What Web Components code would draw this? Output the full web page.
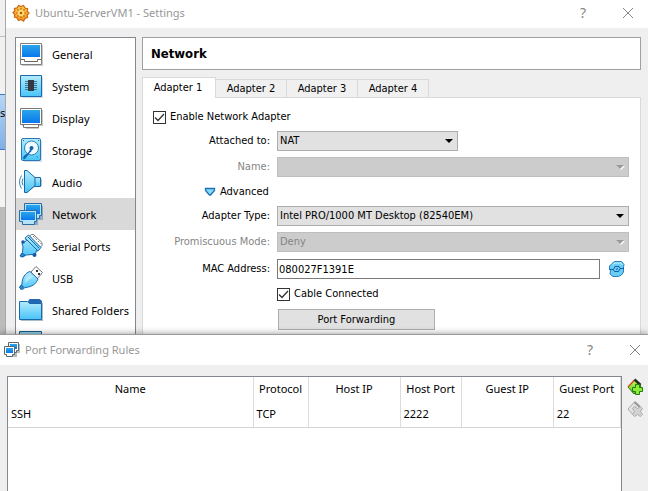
<!DOCTYPE html>
<html lang="en">
<head>
<meta charset="utf-8">
<title>Ubuntu-ServerVM1 - Settings</title>
<style>
  html, body { height: 100%; margin: 0; }
  body {
    position: relative; overflow: hidden; background: #fff; color: #000;
    --ui: "Noto Sans", "Open Sans", sans-serif;
    --form: "DejaVu Sans Condensed", "DejaVu Sans", sans-serif;
    font: 11px/16px var(--ui);
  }
  manager-backdrop { position: absolute; inset: 0; }
  app-window { position: absolute; inset: 0 0 0 5px; }
  app-window.rules { inset: 334px 0 0 0; }
  settings-body, rules-body { flex: 1; }
</style>
</head>
<body>
<manager-backdrop></manager-backdrop>
<app-window caption="Ubuntu-ServerVM1 - Settings" class="settings">
  <ui-icon slot="icon" name="gear" size="18"></ui-icon>
  <settings-body></settings-body>
</app-window>
<app-window caption="Port Forwarding Rules" class="rules">
  <ui-icon slot="icon" name="netsmall" size="18"></ui-icon>
  <rules-body></rules-body>
</app-window>

<script>
const DEFS = `<defs>
  <linearGradient id="scr" x2="0" y2="1"><stop stop-color="#2aa5ea"/><stop offset="1" stop-color="#0878ec"/></linearGradient>
  <linearGradient id="cy" x2="0" y2="1"><stop stop-color="#b4ecfc"/><stop offset="1" stop-color="#48c4f8"/></linearGradient>
  <linearGradient id="or" x2="0" y2="1"><stop stop-color="#fdcb50"/><stop offset="1" stop-color="#f29a24"/></linearGradient>
  <linearGradient id="gr" x2="0" y2="1"><stop stop-color="#c4f45a"/><stop offset="1" stop-color="#58cc20"/></linearGradient></defs>`;

const ICONS = {
  gear: `<path d="M6.500 1.500 9 2.500l2.500-1 1.500 2.500 2.500.8-.3 2.700 1.800 1.500-1.800 2 .3 2.500-2.500 1-1.500 2.500L9 15.500l-2.500 1L5 14l-2.500-1 .3-2.500-1.800-2L2.800 7l-.3-2.500L5 4z" fill="url(#or)" stroke="#cf6a12" stroke-width="1.300"/>
    <circle cx="9" cy="9" r="3.200" fill="#fddc74"/><circle cx="9" cy="9" r="1.300" fill="#b4560c"/>
    <path d="M9 4v1.500M9 12.500V14M4 9h1.500M12.500 9H14M5.500 5.500l1 1M11.500 11.500l1 1M12.500 5.500l-1 1M6.500 11.500l-1 1" stroke="#b65c10" stroke-width="1.200"/>`,
  general: `<path d="M3 3h21v21H3z" fill="#c9c9c9"/><path d="M1.500 1.500h21v21h-21z" fill="#fff" stroke="#808080"/><path d="M3 3h18v12H3z" fill="url(#scr)"/><path d="M2 17.500h3.500v2h13v-2H22" fill="none" stroke="#666"/>`,
  system: `<path d="M3 3h21v21H3z" fill="#d4dde4"/><path d="M1.500 1.500h21v21h-21z" fill="url(#cy)" stroke="#1b68a8"/><path d="M6 7.500h12M6 9.500h12M6 11.500h12M6 13.500h12M6 15.500h12" stroke="#387894"/><path d="M9 6h6v11H9z" fill="#333a44"/>`,
  display: `<path d="M3 4h21v16H20v3H7v-3H3z" fill="#c9c9c9"/><path d="M1.500 2.500h21v16h-3v3h-15v-3h-3z" fill="#fff" stroke="#777"/><path d="M3 4h18v13H3z" fill="url(#scr)"/><path d="M4 18.500h16" stroke="#777"/>`,
  storage: `<path d="M5 3h18v21H5z" fill="#d4dde4"/><rect x="2.500" y=".5" width="19" height="22" rx="1.500" fill="url(#cy)" stroke="#2a76b8"/><circle cx="12.500" cy="10" r="7" fill="#eefaff" stroke="#2b80b8"/><circle cx="12.500" cy="10" r="2" fill="#1a5fa8"/><path d="M13 11c0 3-2 3-3 5l-4 5c-3 1-2-3 0-4s5-4 5-6" fill="#1667ba"/><path d="M18 18.500a3 3 0 0 0 1 1M4 2.500h1M19 2.500h1" stroke="#1a68b0"/>`,
  audio: `<path d="M8 2v21l9-7h6V9h-6L9 2z" fill="#b6c3cc"/><path d="M15.500 7.500h6v9h-6z" fill="url(#cy)" stroke="#1a68a8"/><path d="M5.500.5v22H8l8-7V7.500l-8-7z" fill="url(#cy)" stroke="#1a68a8"/><path d="M4 8.500Q2 12 4 15.500M2.500 5.500Q-1.500 12 2.500 18.500" fill="none" stroke="#3388ba"/>`,
  network: `<path d="M8 4h16v14h-5v5H4v-3H2v-9h6z" fill="#8ea9bb"/><path d="M5.500 1.500h17v12h-2v3h-12v-3h-3z" fill="#b4e2f8" stroke="#2c6ca2"/><path d="M7 3h14v9H7z" fill="url(#scr)"/><path d="M.5 8.500h17v11h-2v3h-12v-3h-3z" fill="#b4e2f8" stroke="#2c6ca2"/><path d="M2 10h14v8H2z" fill="url(#scr)"/>`,
  netsmall: `<path d="M6 3h11v9h-3v4H4v-3H2V7h4z" fill="#b5bcc0"/><path d="M5.500 1.500h10v8h-2v2h-8z" fill="#fff" stroke="#5d666c"/><path d="M7 3h7v5H7z" fill="url(#scr)"/><path d="M1.500 5.500h10v8h-2v2h-6v-2h-2z" fill="#fff" stroke="#5d666c"/><path d="M3 7h7v5H3z" fill="url(#scr)"/>`,
  serial: `<path d="m10.500 2 2-1.500h2l8.500 8v3l-2 2z" fill="#fff" stroke="#777"/><path d="m14 2 7.500 7.500" stroke="#333" stroke-dasharray="1 1.400"/><path d="m6 4 3.500-3L22 13.500 19 17l-1.500-.5-1.500 5-3-1-6 .5-3 2-2.500-1 2-3.500.5-6-1-3 4.500-3z" fill="url(#cy)" stroke="#1868ac"/><path d="M7 5 18.500 16.500M9 3l11 11" stroke="#1868ac"/><circle cx="4" cy="8" r="1.800" fill="#145aa6"/><circle cx="15.500" cy="21" r="2" fill="#145aa6"/><path d="m3 19 3 2-3 2-2-1z" fill="#2d8dce" stroke="#1762a4"/>`,
  usb: `<path d="m12 6 5-5.500 6.500 6L18 13z" fill="#fafafa" stroke="#777"/><path d="M17 4h2v2h-2zM19 7h2v2h-2z" fill="#333"/><path d="m11 5.500 8 7.500c-2 5-6 8-13 8.500l-2.500 2-2.500-2L3 18C3 12 6 7 11 5.500z" fill="url(#cy)" stroke="#1b68a8"/><path d="M8 10.500c-2 2-2.500 5-2 7l9-8z" fill="#fff" opacity=".35"/><path d="m.5 21 2-2 2 2-2.500 2.500z" fill="#2d8dce" stroke="#1762a4"/>`,
  folder: `<path d="M9 3.500 10.500 1h10L23 3v5H9z" fill="#2468b4"/><path d="M2 5h22v18H2z" fill="#a9bdc8"/><path d="M.5 3.500h8l2 2h12v16H.5z" fill="url(#cy)" stroke="#1b68a8"/>`,
  panel: `<path d="M.5 1.500h22v21H.5z" fill="#8fd0e4" stroke="#1d5f8c"/><path d="M3 4.500h17" stroke="#3588a8"/>`,
  refresh: `<path d="M3 2.500 5.500.5h7l2.500 3-.5 2.500v5l-2 3-3 1.500H4L1 13l.5-3L.5 8V5z" fill="#6acdf6" stroke="#2480c2"/>
    <path d="M3.500 3.500 6 2h6l1.500 2" fill="none" stroke="#c4f1ff"/>
    <path d="M.5 8.500h4l1.500-3h4l1 1.500M15 7.500h-4l-1.500 3h-4l-1-1.500M7 8.500l2-1" fill="none" stroke="#155ea6"/>`,
  tri: `<path d="M1.500 2.500h9v2L6.500 9h-1l-4-4.500z" fill="#86dafa" stroke="#1e70b4" stroke-width="1.300"/>`,
  add: `<path d="m1 8 6.500-7L14 7l-7 8z" fill="url(#gr)" stroke="#2d7714"/><path d="M1 8 7.500 1" stroke="#d84c28" stroke-width="1.300"/><path d="M7.500.5 13.500 6" stroke="#262c22" stroke-width="2.500"/><path d="M8.500 5.500h4v3h3v4h-3v3h-4v-3h-3v-4h3z" fill="#8ced38" stroke="#247b10"/>`,
  del: `<path d="m1 8 6.500-7L14 7l-7 8z" fill="#e2e2e2" stroke="#a9a9a9"/><path d="M7.500 1 13 6" stroke="#999" stroke-width="2.300"/><path d="m5.500 7.500 2-2 3 2 3-2 2 2-2 3 2 3-2 2-3-2-3 2-2-2 2-3z" fill="#d2d2d2" stroke="#ababab"/>`,
  close: `<path d="m1 1 10 10M11 1 1 11" fill="none" stroke="#868686"/>`,
  tick: `<path d="m2 6.500 3 3L11 3" fill="none" stroke="#333" stroke-width="1.300"/>`,
  arrow: `<path d="M0 2h8L4 6z" fill="currentColor"/>`
};
const BOX = { gear: 18, netsmall: 18, refresh: 16, tri: 12, add: 16, del: 16, close: 12, tick: 13, arrow: 8 };

function define(name, template) {
  const t = document.createElement('template');
  customElements.define(name, class extends HTMLElement {
    connectedCallback() {
      if (this.shadowRoot) return;
      t.innerHTML = typeof template === 'function' ? template(this) : template;
      this.attachShadow({ mode: 'open' }).append(t.content.cloneNode(true));
    }
  });
}
const attr = (el, n, d = '') => el.getAttribute(n) ?? d;

define('ui-icon', el => {
  const n = attr(el, 'name'), s = attr(el, 'size', '24'), b = BOX[n] || 24;
  return `<style>:host{display:block;flex:none;width:${s}px;height:${s}px}svg{display:block;overflow:visible}</style>
    <svg width="${s}" height="${s}" viewBox="0 0 ${b} ${b}" aria-hidden="true">${DEFS}${ICONS[n]}</svg>`;
});

define('manager-backdrop', `<style>
  :host{display:flex;flex-direction:column;background:#bcbcbc;overflow:hidden}
  .bar{height:36px;background:#f0f0f0;border-bottom:1px solid #bdbdbd}
  .gap{height:57px;background:#f1f1f1}
  .vm{height:54px;line-height:36px;background:linear-gradient(#b7d5f5,#7fb0ea);border:solid #3d7cc4;border-width:1px 0}
  .rest{height:57px;background:#f4f4f4}
  </style><div class="bar"></div><div class="gap"></div><div class="vm">sc</div><div class="rest"></div>`);

define('app-window', el => `<style>
  :host{display:flex;flex-direction:column;box-sizing:border-box;background:#efefef;border-left:1px solid #a8a8a8}
  :host(.rules){border-left:0;border-top:1px solid #9a9a9a;box-shadow:0 -1px 6px #0005}
  header{display:flex;align-items:center;gap:5px;height:28px;padding:0 13px 3px 6px;box-sizing:border-box;background:#fff;color:#979797}
  :host(.rules) header{height:30px;padding:0 6px 1px 3px;gap:4px}
  h1{flex:1;margin:0;font:inherit}
  button{padding:0;border:0;background:none;color:#868686;font:14px/16px var(--ui);width:14px;display:grid;place-items:center}
  .tools{display:flex;align-items:center;gap:31px}
  </style>
  <header><slot name="icon"></slot><h1>${attr(el, 'caption')}</h1><div class="tools">
  <button type="button" title="Help">?</button><button type="button" aria-label="Close"><ui-icon name="close" size="12"></ui-icon></button></div></header>
  <slot></slot>`);

define('nav-item', el => `<style>
  :host{display:block}
  button{display:flex;align-items:center;gap:9px;width:100%;height:32px;padding:0 0 0 3px;border:0;background:none;font:inherit;color:inherit;text-align:left;white-space:nowrap}
  span{padding-top:1px}
  :host([selected]) button{background:#d9d9d9}
  </style><button type="button"><ui-icon name="${attr(el, 'icon')}"></ui-icon><span><slot></slot></span></button>`);

define('check-box', el => `<style>
  :host{display:block}
  label{display:flex;width:fit-content;align-items:center;gap:4px}
  .box{display:grid}
  .box>*{grid-area:1/1}
  input{appearance:none;width:13px;height:13px;margin:0;border:1px solid #333;background:#fff}
  ui-icon{visibility:hidden;pointer-events:none}
  input:checked+ui-icon{visibility:visible}
  </style><label><span class="box"><input type="checkbox" checked><ui-icon name="tick" size="13"></ui-icon></span><slot></slot></label>`);

define('field-row', el => {
  const off = el.hasAttribute('disabled') ? 'disabled' : '';
  const v = attr(el, 'value');
  const ctl = attr(el, 'type') === 'text'
    ? `<input id="c" type="text" value="${v}"><button type="button" aria-label="Refresh"><ui-icon name="refresh" size="16"></ui-icon></button>`
    : `<span class="combo"><select id="c" ${off}><option>${v}</option></select><ui-icon name="arrow" size="8"></ui-icon></span>`;
  return `<style>
  :host{display:grid;grid-template-columns:var(--label) 1fr;column-gap:7px;align-items:center}
  :host([disabled]){color:#858585}
  label{text-align:right;white-space:nowrap}
  .line{display:flex;align-items:center;gap:9px}
  .combo{display:grid;flex:1;align-items:center}
  :host([narrow]) .combo{flex:0 0 181px}
  .combo>*{grid-area:1/1}
  .combo ui-icon{justify-self:end;margin-right:5px;pointer-events:none;color:#000}
  :host([disabled]) .combo ui-icon{color:#999;filter:drop-shadow(1px 1px 0 #fff)}
  select,input{appearance:none;box-sizing:border-box;width:100%;height:20px;margin:0;padding:0 2px;border:1px solid #adadad;border-radius:0;background:#e1e1e1;color:inherit;font:inherit;opacity:1}
  select:disabled{background:#ccc;border-color:#bfbfbf}
  input{flex:1;min-width:0;height:20px;padding:0 1px;background:#fff;border-color:#7a7a7a}
  .line>button{width:20px;height:20px;padding:0;border:0;background:none}
  </style><label for="c">${attr(el, 'label')}</label><div class="line">${ctl}</div>`;
});

define('tab-strip', `<style>
  :host{display:block;position:relative;z-index:1}
  button{height:19px;margin:0 0 -1px;padding:0;width:71px;box-sizing:border-box;border:1px solid #d9d9d9;border-left:0;background:#f0f0f0;color:inherit;font:inherit}
  button[aria-selected=true]{height:21px;width:74px;border-left:1px solid #d9d9d9;border-bottom:0;background:#fff;padding-right:2px}
  div{display:flex;align-items:flex-end}
  </style><div role="tablist"><button role="tab" aria-selected="true">Adapter 1</button><button role="tab">Adapter 2</button><button role="tab">Adapter 3</button><button role="tab">Adapter 4</button></div>`);

define('settings-body', `<style>
  :host{display:grid;grid-template-columns:121px 1fr;gap:6px;padding:9px 7px 0 9px;min-height:0}
  nav{border:1px solid #828790;background:#fff;overflow:hidden;min-height:0}
  main{display:flex;flex-direction:column;min-width:0;font:11px/16px var(--form)}
  h2{margin:0 0 7px;padding:8px;border:1px solid #a0a0a0;background:#fff;font:bold 13px/15px var(--form)}
  section{flex:1;border:1px solid #d9d9d9;background:#fff;padding:11px 11px 0 10px;display:flex;flex-direction:column;gap:6px;--label:117px}
  .in{margin:1px 0 1px 124px}
  .mac{margin-top:1px}
  .adv{display:flex;align-items:center;gap:4px;height:17px;margin-left:51px;padding:0;border:0;background:none;font:inherit;color:inherit}
  .pf{width:157px;height:21px;margin-left:125px;padding:0;border:1px solid #adadad;background:#e1e1e1;font:inherit;color:inherit}
  </style>
  <nav>
    <nav-item icon="general">General</nav-item><nav-item icon="system">System</nav-item><nav-item icon="display">Display</nav-item>
    <nav-item icon="storage">Storage</nav-item><nav-item icon="audio">Audio</nav-item><nav-item icon="network" selected>Network</nav-item>
    <nav-item icon="serial">Serial Ports</nav-item><nav-item icon="usb">USB</nav-item><nav-item icon="folder">Shared Folders</nav-item>
    <nav-item icon="panel"></nav-item>
  </nav>
  <main>
    <h2>Network</h2>
    <tab-strip></tab-strip>
    <section>
      <check-box>Enable Network Adapter</check-box>
      <field-row label="Attached to:" value="NAT" narrow></field-row>
      <field-row label="Name:" value="" disabled></field-row>
      <button type="button" class="adv"><ui-icon name="tri" size="12"></ui-icon>Advanced</button>
      <field-row label="Adapter Type:" value="Intel PRO/1000 MT Desktop (82540EM)"></field-row>
      <field-row label="Promiscuous Mode:" value="Deny" disabled></field-row>
      <field-row class="mac" label="MAC Address:" value="080027F1391E" type="text"></field-row>
      <check-box class="in">Cable Connected</check-box>
      <button type="button" class="pf">Port Forwarding</button>
    </section>
  </main>`);

define('rules-body', `<style>
  :host{display:flex;gap:5px;padding:11px 5px 0 7px;min-height:0}
  .view{flex:1;border:1px solid #828790;border-bottom:0;background:#fff}
  table{width:100%;border-collapse:collapse;table-layout:fixed}
  th,td{box-sizing:border-box;padding:0 3px;border-right:1px solid #dcdcdc;white-space:nowrap;font-weight:400}
  th{height:24px;text-align:center;padding:0}
  td{height:26px;border-bottom:1px solid #d4d4d4}
  .tools{display:flex;flex-direction:column;gap:6px;padding-top:3px}
  .tools button{padding:0;border:0;background:none}
  </style>
  <div class="view"><table>
  <colgroup><col><col style="width:9%"><col style="width:15%"><col style="width:10%"><col style="width:15%"><col style="width:11%"></colgroup>
  <thead><tr><th>Name</th><th>Protocol</th><th>Host IP</th><th>Host Port</th><th>Guest IP</th><th>Guest Port</th></tr></thead>
  <tbody><tr><td>SSH</td><td>TCP</td><td></td><td>2222</td><td></td><td>22</td></tr></tbody></table></div>
  <div class="tools"><button type="button" aria-label="Add rule"><ui-icon name="add" size="16"></ui-icon></button><button type="button" aria-label="Remove rule" disabled><ui-icon name="del" size="16"></ui-icon></button></div>`);
</script>
</body>
</html>
